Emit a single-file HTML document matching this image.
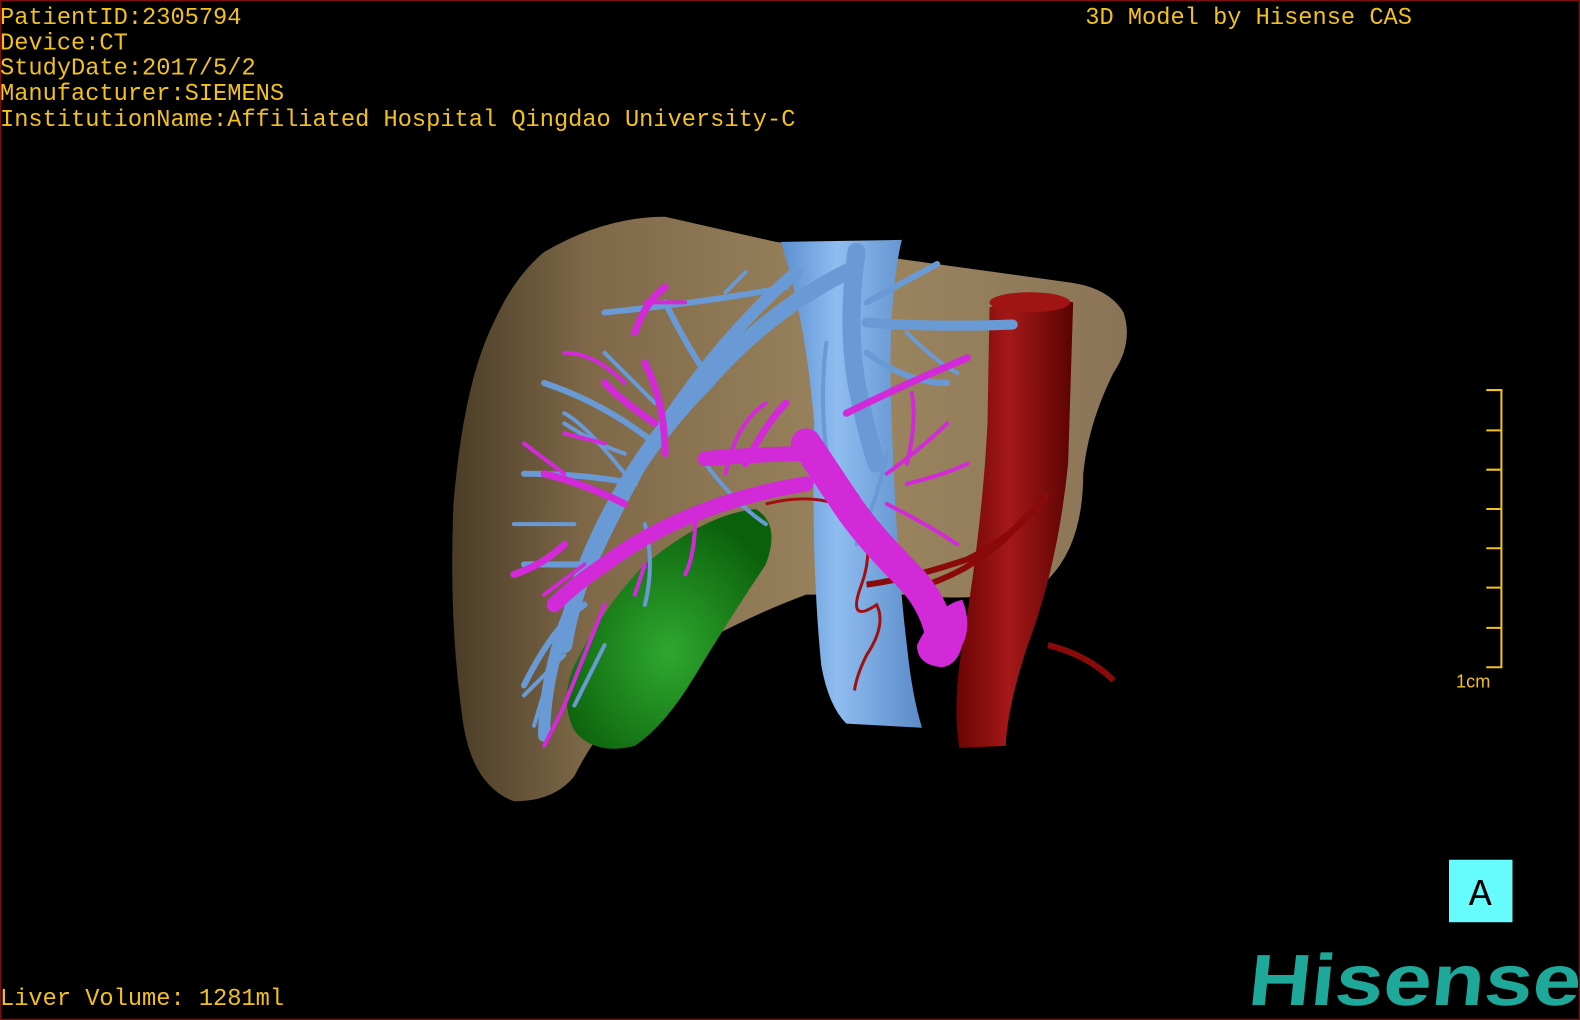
<!DOCTYPE html>
<html><head><meta charset="utf-8"><style>
html,body{margin:0;padding:0;background:#000;width:1580px;height:1020px;overflow:hidden}
svg{display:block}
.t{font-family:"Liberation Mono",monospace;fill:#f2c21b;font-size:23.5px}
</style></head><body>
<svg width="1580" height="1020" viewBox="0 0 1568 1012" preserveAspectRatio="none">
<defs>
<linearGradient id="liv" x1="0" x2="1" y1="0" y2="0">
<stop offset="0" stop-color="#4a3c26"/><stop offset="0.2" stop-color="#7e6848"/><stop offset="0.6" stop-color="#9c8660"/><stop offset="1" stop-color="#8a7456"/></linearGradient>
<linearGradient id="ivc" x1="0" x2="1"><stop offset="0" stop-color="#5c8fd0"/><stop offset="0.4" stop-color="#8fbdf0"/><stop offset="1" stop-color="#5a8ac8"/></linearGradient>
<linearGradient id="ao" x1="0" x2="1"><stop offset="0" stop-color="#6a0404"/><stop offset="0.45" stop-color="#a51818"/><stop offset="1" stop-color="#5a0303"/></linearGradient>
<radialGradient id="gb" cx="0.5" cy="0.6" r="0.6"><stop offset="0" stop-color="#2fa82f"/><stop offset="1" stop-color="#0b600b"/></radialGradient>
</defs>
<rect x="0.5" y="0.5" width="1567" height="1011" fill="#000" stroke="#7a1010" stroke-width="1.5"/>
<path d="M540 250 Q600 215 660 215 L770 240 L1060 280 Q1100 285 1115 310 Q1125 340 1105 370 Q1080 420 1075 470 Q1075 540 1040 575 Q990 600 900 590 L800 590 Q720 620 660 660 Q600 710 570 770 Q550 795 510 795 Q470 780 460 720 Q445 620 450 500 Q460 380 490 320 Q510 275 540 250Z" fill="url(#liv)"/>
<path d="M775 240 L895 238 Q880 300 885 420 Q890 560 900 640 Q905 690 915 722 L840 718 Q822 700 815 660 Q805 560 808 420 Q800 320 775 240Z" fill="url(#ivc)"/>
<path d="M982 305 Q1020 290 1065 300 L1060 460 Q1050 560 1020 640 Q1000 700 998 740 L952 742 Q945 700 955 640 Q975 520 980 420Z" fill="url(#ao)"/>
<ellipse cx="1022" cy="300" rx="40" ry="10" fill="#a01414"/>
<path d="M1040 490 Q1010 530 960 555 Q900 575 860 580 M1020 510 Q980 560 920 580 M1040 640 Q1080 650 1105 675" stroke="#8a0a0a" stroke-width="6" fill="none"/>
<path d="M850 490 Q870 540 855 580 Q840 620 870 600 Q880 620 860 650 Q850 670 848 685 M760 500 Q800 490 830 500" stroke="#a01010" stroke-width="3" fill="none"/>
<path d="M570 660 Q600 600 640 560 Q700 510 750 505 Q775 520 760 560 Q720 620 690 670 Q660 720 630 740 Q590 750 570 725 Q555 695 570 660Z" fill="url(#gb)"/>
<g stroke="#6a9ad6" fill="none" stroke-linecap="round">
<path d="M850 250 Q840 320 850 380 Q860 430 870 460" stroke-width="18"/>
<path d="M840 270 Q760 310 700 380 Q640 440 600 520 Q570 580 560 640" stroke-width="16"/>
<path d="M790 270 Q720 330 660 420 Q600 520 560 620 Q540 680 540 730" stroke-width="12"/>
<path d="M860 320 Q930 325 1005 322" stroke-width="10"/>
<path d="M860 300 L930 262 M780 285 Q700 300 600 310 M650 440 Q600 400 540 380 M630 480 Q580 470 520 470 M700 370 Q680 340 660 300 M860 350 Q900 380 940 380 M600 560 Q560 560 520 560 M580 600 Q550 620 520 680" stroke-width="6"/>
<path d="M820 340 Q810 420 830 500 M700 460 Q730 500 760 520 M880 450 Q870 500 850 540 M640 520 Q650 560 640 600 M560 420 Q590 440 620 450 M600 350 Q630 380 650 400 M720 290 L740 270 M570 520 Q540 520 510 520 M580 580 Q550 650 530 720 M620 470 Q580 420 560 410 M900 330 Q930 360 950 370 M600 640 L570 700 M560 650 L520 690" stroke-width="4"/>
</g>
<g stroke="#d22ad8" fill="none" stroke-linecap="round">
<path d="M935 640 Q930 600 900 570 Q860 530 840 500 Q820 470 800 440" stroke-width="30"/>
<path d="M815 450 Q760 450 700 455 M800 480 Q740 490 690 510 Q640 530 600 560 Q570 580 550 600" stroke-width="15"/>
<path d="M660 450 Q660 400 640 360 M840 410 Q900 380 960 355 M740 460 Q760 420 780 400 M620 500 Q580 480 540 470 M650 420 Q620 400 600 380 M630 330 Q640 300 660 285 M560 540 Q540 560 510 570" stroke-width="7"/>
<path d="M880 470 Q920 440 940 420 M880 500 Q920 520 950 540 M690 510 Q690 550 680 570 M620 380 Q590 350 560 350 M640 300 L680 300 M600 600 Q580 650 560 700 Q545 730 540 740 M900 460 Q910 420 905 390 M600 440 L560 430 M640 560 L630 590 M720 470 Q730 420 760 400 M900 480 Q940 470 960 460 M560 470 L520 440 M580 560 L540 590" stroke-width="4"/>
</g>
<path d="M910 640 Q930 600 955 595 Q965 620 955 640 Q950 660 935 662 Q910 660 910 640Z" fill="#d22ad8"/>
<text class="t" x="0" y="24">PatientID:2305794</text>
<text class="t" x="0" y="49">Device:CT</text>
<text class="t" x="0" y="74">StudyDate:2017/5/2</text>
<text class="t" x="0" y="99">Manufacturer:SIEMENS</text>
<text class="t" x="0" y="125">InstitutionName:Affiliated Hospital Qingdao University-C</text>
<text class="t" x="1077" y="24">3D Model by Hisense CAS</text>
<text class="t" x="0" y="997">Liver Volume: 1281ml</text>
<g stroke="#f2c21b" stroke-width="2" fill="none">
<path d="M1475 387 H1490 V662 H1475 M1475 427 H1490 M1475 466 H1490 M1475 505 H1490 M1475 544 H1490 M1475 583 H1490 M1475 623 H1490"/>
</g>
<text x="1445" y="682" font-family="Liberation Sans,sans-serif" font-size="18" fill="#f2c21b">1cm</text>
<rect x="1438" y="853" width="63" height="62" fill="#66fbfd"/>
<text x="1469" y="898" text-anchor="middle" font-family="Liberation Mono,monospace" font-size="38" fill="#000">A</text>
<text x="1237" y="997" font-family="Liberation Sans,sans-serif" font-weight="bold" font-size="72" fill="#1ea89a" textLength="330" lengthAdjust="spacingAndGlyphs" transform="skewX(-6)" transform-origin="1237 997">Hisense</text>
</svg>
</body></html>
